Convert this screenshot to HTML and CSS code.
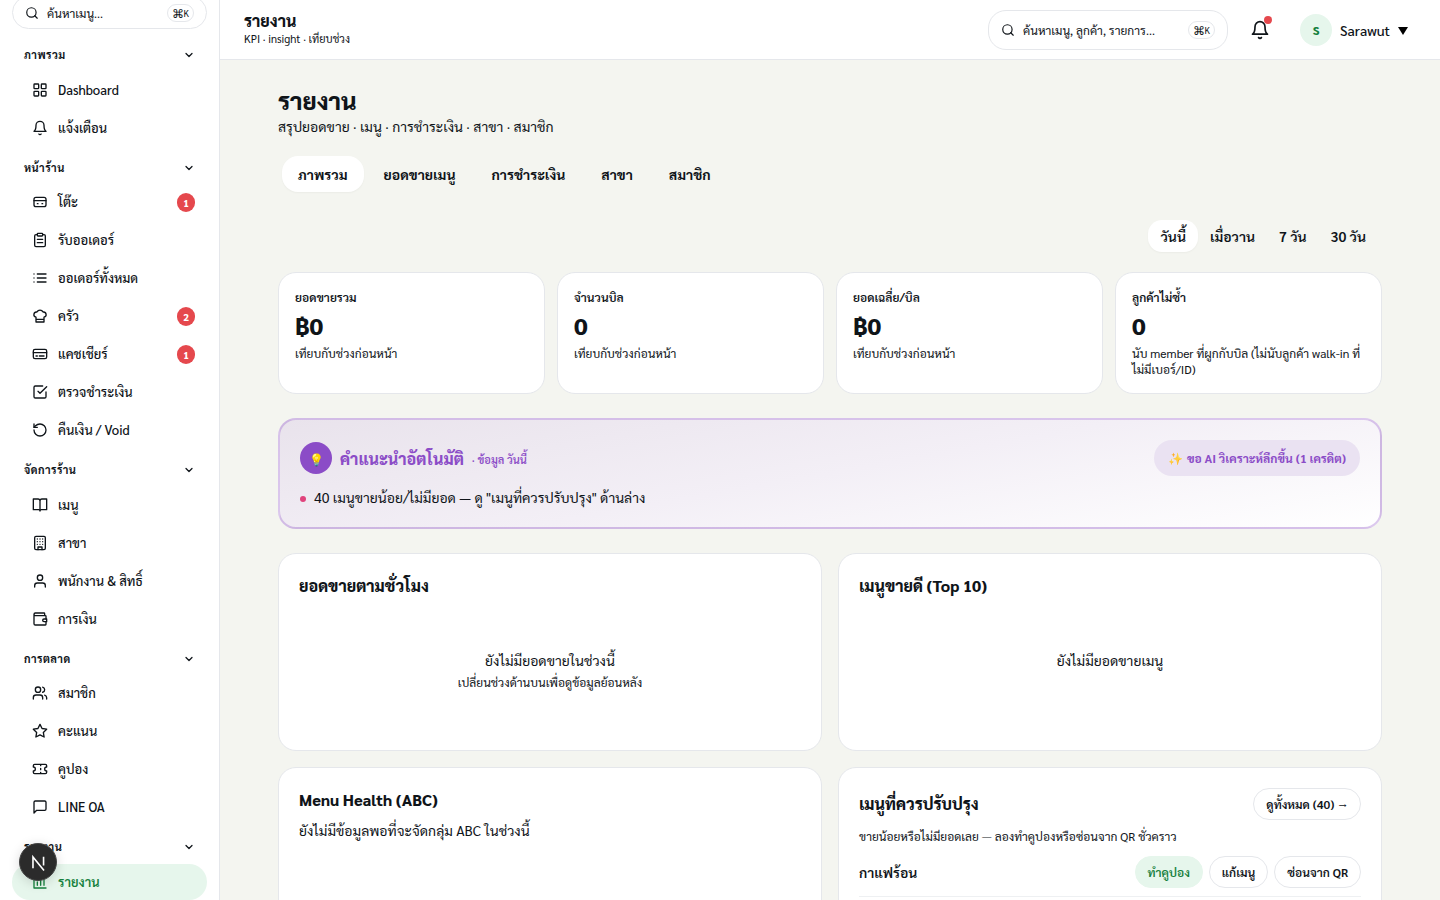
FILE: index.html
```html
<!DOCTYPE html>
<html lang="th">
<head>
    <meta charset="UTF-8">
    <meta name="viewport" content="width=device-width, initial-scale=1.0">
    <title>รายงาน</title>
    <link rel="stylesheet" href="styles.css">
</head>
<body>
    <div class="app">
        <aside class="sidebar">
            <div class="side-search">
                <svg class="icon icon-sm" viewBox="0 0 24 24"><circle cx="11" cy="11" r="8"/><path d="m21 21-4.3-4.3"/></svg>
                <span class="search-text">ค้นหาเมนู...</span>
                <kbd class="kbd">⌘<small>K</small></kbd>
            </div>

            <div class="nav-head"><span>ภาพรวม</span><svg class="icon chev" viewBox="0 0 24 24"><path d="m6 9 6 6 6-6"/></svg></div>
            <nav class="nav-list">
                <a class="nav-item"><svg class="icon" viewBox="0 0 24 24"><rect x="3" y="3" width="7" height="7" rx="1"/><rect x="14" y="3" width="7" height="7" rx="1"/><rect x="14" y="14" width="7" height="7" rx="1"/><rect x="3" y="14" width="7" height="7" rx="1"/></svg><span>Dashboard</span></a>
                <a class="nav-item"><svg class="icon" viewBox="0 0 24 24"><path d="M6 8a6 6 0 0 1 12 0c0 7 3 9 3 9H3s3-2 3-9"/><path d="M10.3 21a1.94 1.94 0 0 0 3.4 0"/></svg><span>แจ้งเตือน</span></a>
            </nav>

            <div class="nav-head"><span>หน้าร้าน</span><svg class="icon chev" viewBox="0 0 24 24"><path d="m6 9 6 6 6-6"/></svg></div>
            <nav class="nav-list">
                <a class="nav-item"><svg class="icon" viewBox="0 0 24 24"><rect x="3" y="5" width="18" height="14" rx="3"/><path d="M3 10h18M8 14.5h1M15 14.5h1"/></svg><span>โต๊ะ</span><b class="badge">1</b></a>
                <a class="nav-item"><svg class="icon" viewBox="0 0 24 24"><rect x="8" y="2" width="8" height="4" rx="1"/><path d="M16 4h2a2 2 0 0 1 2 2v14a2 2 0 0 1-2 2H6a2 2 0 0 1-2-2V6a2 2 0 0 1 2-2h2M8 11h8M8 16h8"/></svg><span>รับออเดอร์</span></a>
                <a class="nav-item"><svg class="icon" viewBox="0 0 24 24"><path d="M8 6h13M8 12h13M8 18h13M3 6h.01M3 12h.01M3 18h.01"/></svg><span>ออเดอร์ทั้งหมด</span></a>
                <a class="nav-item"><svg class="icon" viewBox="0 0 24 24"><path d="M6 13.87A4 4 0 0 1 7.41 6a5.11 5.11 0 0 1 9.18 0A4 4 0 0 1 18 13.87V21H6ZM6 17h12"/></svg><span>ครัว</span><b class="badge">2</b></a>
                <a class="nav-item"><svg class="icon" viewBox="0 0 24 24"><rect x="2" y="5" width="20" height="14" rx="2.5"/><path d="M2 10h20M6 15h2M11 15h7"/></svg><span>แคชเชียร์</span><b class="badge">1</b></a>
                <a class="nav-item"><svg class="icon" viewBox="0 0 24 24"><path d="m9 11 3 3L22 4"/><path d="M21 12v7a2 2 0 0 1-2 2H5a2 2 0 0 1-2-2V5a2 2 0 0 1 2-2h11"/></svg><span>ตรวจชำระเงิน</span></a>
                <a class="nav-item"><svg class="icon" viewBox="0 0 24 24"><path d="M3 12a9 9 0 1 0 9-9 9.75 9.75 0 0 0-6.74 2.74L3 8"/><path d="M3 3v5h5"/></svg><span>คืนเงิน / Void</span></a>
            </nav>

            <div class="nav-head"><span>จัดการร้าน</span><svg class="icon chev" viewBox="0 0 24 24"><path d="m6 9 6 6 6-6"/></svg></div>
            <nav class="nav-list">
                <a class="nav-item"><svg class="icon" viewBox="0 0 24 24"><path d="M2 3h7a3 3 0 0 1 3 3v15a2 2 0 0 0-2-2H2zM22 3h-7a3 3 0 0 0-3 3v15a2 2 0 0 1 2-2h8z"/></svg><span>เมนู</span></a>
                <a class="nav-item"><svg class="icon" viewBox="0 0 24 24"><rect x="4" y="2" width="16" height="20" rx="2"/><path d="M9 22v-4h6v4M8 6h.01M12 6h.01M16 6h.01M8 10h.01M12 10h.01M16 10h.01M8 14h.01M12 14h.01M16 14h.01"/></svg><span>สาขา</span></a>
                <a class="nav-item"><svg class="icon" viewBox="0 0 24 24"><circle cx="12" cy="7" r="4"/><path d="M20 21v-2a4 4 0 0 0-4-4H8a4 4 0 0 0-4 4v2"/></svg><span>พนักงาน &amp; สิทธิ์</span></a>
                <a class="nav-item"><svg class="icon" viewBox="0 0 24 24"><path d="M19 7V4a1 1 0 0 0-1-1H5a2 2 0 0 0 0 4h15a1 1 0 0 1 1 1v4M3 5v14a2 2 0 0 0 2 2h15a1 1 0 0 0 1-1v-4"/><path d="M22 12v4h-4a2 2 0 0 1 0-4Z"/></svg><span>การเงิน</span></a>
            </nav>

            <div class="nav-head"><span>การตลาด</span><svg class="icon chev" viewBox="0 0 24 24"><path d="m6 9 6 6 6-6"/></svg></div>
            <nav class="nav-list">
                <a class="nav-item"><svg class="icon" viewBox="0 0 24 24"><circle cx="9" cy="7" r="4"/><path d="M16 21v-2a4 4 0 0 0-4-4H6a4 4 0 0 0-4 4v2M22 21v-2a4 4 0 0 0-3-3.87M16 3.13a4 4 0 0 1 0 7.75"/></svg><span>สมาชิก</span></a>
                <a class="nav-item"><svg class="icon" viewBox="0 0 24 24"><path d="m12 2 3.09 6.26L22 9.27l-5 4.87 1.18 6.88L12 17.77l-6.18 3.25L7 14.14 2 9.27l6.91-1.01z"/></svg><span>คะแนน</span></a>
                <a class="nav-item"><svg class="icon" viewBox="0 0 24 24"><path d="M2 9a3 3 0 0 1 0 6v2a2 2 0 0 0 2 2h16a2 2 0 0 0 2-2v-2a3 3 0 0 1 0-6V7a2 2 0 0 0-2-2H4a2 2 0 0 0-2 2ZM13 5v2M13 17v2M13 11v2"/></svg><span>คูปอง</span></a>
                <a class="nav-item"><svg class="icon" viewBox="0 0 24 24"><path d="M21 15a2 2 0 0 1-2 2H7l-4 4V5a2 2 0 0 1 2-2h14a2 2 0 0 1 2 2z"/></svg><span>LINE OA</span></a>
            </nav>

            <div class="nav-head"><span>รายงาน</span><svg class="icon chev" viewBox="0 0 24 24"><path d="m6 9 6 6 6-6"/></svg></div>
            <nav class="nav-list">
                <a class="nav-item active"><svg class="icon" viewBox="0 0 24 24"><path d="M3 3v18h18M8 17v-5M13 17V7M18 17V9"/></svg><span>รายงาน</span></a>
            </nav>
        </aside>

        <div class="main">
            <header class="topbar">
                <div class="topbar-title">
                    <strong>รายงาน</strong>
                    <span>KPI · insight · เทียบช่วง</span>
                </div>
                <div class="top-search">
                    <svg class="icon icon-sm" viewBox="0 0 24 24"><circle cx="11" cy="11" r="8"/><path d="m21 21-4.3-4.3"/></svg>
                    <span class="search-text">ค้นหาเมนู, ลูกค้า, รายการ...</span>
                    <kbd class="kbd">⌘<small>K</small></kbd>
                </div>
                <div class="bell">
                    <svg class="icon" viewBox="0 0 24 24"><path d="M6 8a6 6 0 0 1 12 0c0 7 3 9 3 9H3s3-2 3-9"/><path d="M10.3 21a1.94 1.94 0 0 0 3.4 0"/></svg>
                    <i class="bell-dot"></i>
                </div>
                <div class="avatar">S</div>
                <span class="user-name">Sarawut</span>
                <svg class="caret" viewBox="0 0 10 8"><path d="M0 0h10L5 8z"/></svg>
            </header>

            <main class="content">
                <h1>รายงาน</h1>
                <p class="subtitle">สรุปยอดขาย · เมนู · การชำระเงิน · สาขา · สมาชิก</p>

                <div class="tabs">
                    <button class="tab active">ภาพรวม</button>
                    <button class="tab">ยอดขายเมนู</button>
                    <button class="tab">การชำระเงิน</button>
                    <button class="tab">สาขา</button>
                    <button class="tab">สมาชิก</button>
                </div>

                <div class="range">
                    <button class="range-btn active">วันนี้</button>
                    <button class="range-btn">เมื่อวาน</button>
                    <button class="range-btn">7 วัน</button>
                    <button class="range-btn">30 วัน</button>
                </div>

                <section class="kpis">
                    <div class="kpi">
                        <div class="kpi-label">ยอดขายรวม</div>
                        <div class="kpi-value">฿0</div>
                        <div class="kpi-hint">เทียบกับช่วงก่อนหน้า</div>
                    </div>
                    <div class="kpi">
                        <div class="kpi-label">จำนวนบิล</div>
                        <div class="kpi-value">0</div>
                        <div class="kpi-hint">เทียบกับช่วงก่อนหน้า</div>
                    </div>
                    <div class="kpi">
                        <div class="kpi-label">ยอดเฉลี่ย/บิล</div>
                        <div class="kpi-value">฿0</div>
                        <div class="kpi-hint">เทียบกับช่วงก่อนหน้า</div>
                    </div>
                    <div class="kpi">
                        <div class="kpi-label">ลูกค้าไม่ซ้ำ</div>
                        <div class="kpi-value">0</div>
                        <div class="kpi-hint">นับ member ที่ผูกกับบิล (ไม่นับลูกค้า walk-in ที่<br>ไม่มีเบอร์/ID)</div>
                    </div>
                </section>

                <section class="insight">
                    <div class="insight-head">
                        <span class="bulb">💡</span>
                        <h2>คำแนะนำอัตโนมัติ</h2>
                        <span class="insight-range">· ข้อมูล วันนี้</span>
                        <button class="ai-btn"><span class="spark">✨</span> <span>ขอ AI วิเคราะห์ลึกขึ้น (1 เครดิต)</span></button>
                    </div>
                    <div class="insight-row"><i class="dot"></i><span>40 เมนูขายน้อย/ไม่มียอด — ดู "เมนูที่ควรปรับปรุง" ด้านล่าง</span></div>
                </section>

                <section class="cards">
                    <div class="card">
                        <h3>ยอดขายตามชั่วโมง</h3>
                        <div class="empty">
                            <span>ยังไม่มียอดขายในช่วงนี้</span>
                            <small>เปลี่ยนช่วงด้านบนเพื่อดูข้อมูลย้อนหลัง</small>
                        </div>
                    </div>
                    <div class="card">
                        <h3>เมนูขายดี (Top 10)</h3>
                        <div class="empty"><span>ยังไม่มียอดขายเมนู</span></div>
                    </div>
                    <div class="card">
                        <h3>Menu Health (ABC)</h3>
                        <p class="card-text">ยังไม่มีข้อมูลพอที่จะจัดกลุ่ม ABC ในช่วงนี้</p>
                    </div>
                    <div class="card">
                        <div class="card-head">
                            <h3>เมนูที่ควรปรับปรุง</h3>
                            <button class="pill">ดูทั้งหมด (40) →</button>
                        </div>
                        <p class="card-hint">ขายน้อยหรือไม่มียอดเลย — ลองทำคูปองหรือซ่อนจาก QR ชั่วคราว</p>
                        <div class="menu-row">
                            <span class="menu-name">กาแฟร้อน</span>
                            <button class="pill green">ทำคูปอง</button>
                            <button class="pill">แก้เมนู</button>
                            <button class="pill">ซ่อนจาก QR</button>
                        </div>
                    </div>
                </section>
            </main>
        </div>
    </div>

    <div class="dev-badge">
        <svg viewBox="0 0 20 20"><path d="M5.2 15V5.2L14.8 17M14.4 5v7.5"/></svg>
    </div>
</body>
</html>
```
FILE: styles.css
```css
* {
    box-sizing: border-box;
}
body {
    margin: 0;
    height: 900px;
    overflow: hidden;
    font-family: "Sarabun", "Noto Sans Thai Looped", "Noto Sans Thai", "Noto Sans", sans-serif;
    font-size: 14px;
    color: #0f1419;
    background: #f4f5f0;
}
h1, h2, h3, p {
    margin: 0;
}
h1, h2, h3 {
    font-weight: 800;
}
button {
    font: inherit;
    color: inherit;
    border: none;
    background: none;
    padding: 0;
    white-space: nowrap;
}
.app {
    display: flex;
    height: 900px;
    overflow: hidden;
}
.icon {
    width: 16px;
    height: 16px;
    flex: none;
    fill: none;
    stroke: currentColor;
    stroke-width: 2;
    stroke-linecap: round;
    stroke-linejoin: round;
}
.icon-sm {
    width: 14px;
    height: 14px;
}

/* Sidebar */
.sidebar {
    width: 220px;
    flex: none;
    height: 900px;
    overflow: hidden;
    padding: 0 12px;
    background: #fff;
    border-right: 1px solid #e5e7eb;
}
.side-search, .top-search {
    display: flex;
    align-items: center;
    gap: 8px;
    background: #fff;
    border: 1px solid #e5e7eb;
    border-radius: 18px;
    white-space: nowrap;
}
.side-search {
    height: 33px;
    margin: -4px 0 12px;
    padding: 0 12px;
    font-size: 12px;
}
.search-text {
    flex: 1;
}
.kbd {
    display: flex;
    align-items: center;
    height: 18px;
    padding: 0 4px;
    border: 1px solid #e5e7eb;
    border-radius: 9px;
    font-family: inherit;
    font-size: 12px;
}
.kbd small {
    font-size: 9px;
}
.nav-head {
    display: flex;
    align-items: center;
    justify-content: space-between;
    height: 28.5px;
    padding: 0 12px;
    margin-bottom: 2px;
    font-size: 11px;
    font-weight: 700;
    letter-spacing: 0.44px;
}
.nav-head span, .nav-item span {
    margin-bottom: 0.6px;
}
.chev {
    width: 12px;
    height: 12px;
    stroke-width: 2.5;
}
.nav-list {
    display: flex;
    flex-direction: column;
    gap: 2px;
    margin-bottom: 8px;
}
.nav-item {
    display: flex;
    align-items: center;
    gap: 10px;
    height: 36px;
    padding: 0 12px 0 20px;
    border-radius: 18px;
    font-size: 13px;
    font-weight: 500;
    white-space: nowrap;
}
.nav-item.active {
    background: #e6f6ec;
    color: #15803d;
    font-weight: 600;
}
.badge {
    width: 18px;
    height: 19px;
    margin-left: auto;
    border-radius: 9px;
    background: #e5484d;
    color: #fff;
    font-size: 10px;
    font-weight: 800;
    line-height: 20px;
    text-align: center;
}

/* Top bar */
.main {
    flex: 1;
    min-width: 0;
}
.topbar {
    display: flex;
    align-items: center;
    height: 60px;
    padding: 0 32px 0 24px;
    background: #fff;
    border-bottom: 1px solid #e5e7eb;
}
.topbar-title {
    display: flex;
    flex-direction: column;
    margin: 0 auto 2px 0;
    font-size: 11px;
    line-height: 16px;
}
.topbar-title strong {
    font-size: 16px;
    font-weight: 800;
    line-height: 20px;
}
.top-search {
    width: 240px;
    height: 40px;
    padding: 0 12px;
    border-radius: 18px;
    font-size: 12px;
}
.bell {
    position: relative;
    display: flex;
    margin: 0 30px 0 22px;
}
.bell .icon {
    width: 20px;
    height: 20px;
}
.bell-dot {
    position: absolute;
    top: -4px;
    right: -2px;
    width: 8px;
    height: 8px;
    border-radius: 50%;
    background: #e5484d;
}
.avatar {
    width: 32px;
    height: 32px;
    border-radius: 50%;
    background: #e6f6ec;
    color: #15803d;
    font-size: 12px;
    font-weight: 800;
    line-height: 33px;
    text-align: center;
}
.user-name {
    width: 50px;
    margin: 0 8px;
    font-weight: 500;
}
.caret {
    width: 10px;
    height: 8px;
    margin-top: 2px;
}

/* Page */
.content {
    width: 1104px;
    margin: 0 auto;
    padding-top: 26px;
}
h1 {
    font-size: 24px;
    line-height: 28px;
}
.subtitle {
    margin-top: 1px;
    line-height: 22px;
}
.tabs {
    display: flex;
    gap: 4px;
    margin-top: 15px;
    padding: 4px;
}
.tab {
    height: 36px;
    padding: 0 16px;
    border-radius: 16px;
    font-weight: 700;
}
.tab.active, .range-btn.active {
    background: #fff;
    box-shadow: 0 1px 2px rgba(0,0,0,0.04);
}
.range {
    display: flex;
    justify-content: flex-end;
    margin-top: 20px;
    padding: 4px;
}
.range-btn {
    height: 32px;
    padding: 0 12px;
    border-radius: 14px;
    font-weight: 600;
}
.kpis {
    display: grid;
    grid-template-columns: repeat(4, 1fr);
    gap: 12px;
    margin-top: 16px;
}
.kpi, .card {
    background: #fff;
    border: 1px solid #e5e7eb;
    border-radius: 18px;
}
.kpi {
    height: 122px;
    padding: 15px 16px;
    white-space: nowrap;
}
.kpi-label {
    font-size: 12px;
    font-weight: 600;
    line-height: 18px;
}
.kpi-value {
    font-size: 24px;
    font-weight: 800;
    line-height: 28px;
    margin: 5px 0 6px;
}
.kpi-hint {
    font-size: 12px;
    line-height: 16px;
}

.insight {
    height: 111px;
    margin-top: 24px;
    padding: 20px;
    border: 2px solid rgba(139, 76, 199, 0.3);
    border-radius: 18px;
    background: linear-gradient(170deg, #e9e3ec 0%, #f3eff6 50%, #ffffff 100%);
}
.insight-head {
    display: flex;
    align-items: center;
    gap: 8px;
    height: 36px;
    color: #8b4cc7;
    white-space: nowrap;
}
.bulb {
    width: 32px;
    height: 32px;
    border-radius: 50%;
    background: #8b4cc7;
    font-size: 12px;
    line-height: 34px;
    text-align: center;
}
h2 {
    font-size: 16px;
}
.insight-range {
    margin-top: 3px;
    font-size: 11px;
    font-weight: 600;
}
.ai-btn {
    display: flex;
    align-items: center;
    gap: 4px;
    height: 36px;
    margin-left: auto;
    padding: 0 14px;
    border-radius: 18px;
    background: #eae2f2;
    font-size: 12px;
    font-weight: 700;
}
.spark {
    filter: hue-rotate(-12deg);
}
.insight-row {
    display: flex;
    align-items: center;
    gap: 8px;
    height: 24px;
    margin-top: 9px;
}
.dot {
    width: 6px;
    height: 6px;
    margin-top: 3px;
    border-radius: 50%;
    background: #e0437c;
}

.cards {
    display: grid;
    grid-template-columns: 1fr 1fr;
    gap: 16px;
    margin-top: 24px;
}
.card {
    min-height: 198px;
    padding: 20px;
    white-space: nowrap;
}
h3 {
    font-size: 16px;
    line-height: 24px;
}
.empty {
    display: flex;
    flex-direction: column;
    align-items: center;
    margin-top: 51px;
    line-height: 22px;
}
.empty small {
    font-size: 12px;
}
.card-text {
    margin-top: 7px;
    line-height: 22px;
}
.card-head, .menu-row {
    display: flex;
    align-items: center;
}
.card-head {
    justify-content: space-between;
    height: 32px;
}
.card-hint {
    margin-top: 6px;
    font-size: 12px;
    line-height: 20px;
}
.menu-row {
    gap: 6px;
    margin-top: 10px;
    padding-bottom: 8px;
    border-bottom: 1px solid #eef0f2;
}
.menu-name {
    margin-right: auto;
    font-weight: 600;
}
.pill {
    height: 32px;
    padding: 0 12px;
    border: 1px solid #e5e7eb;
    border-radius: 16px;
    font-size: 12px;
    font-weight: 600;
}
.pill.green {
    background: #e6f6ec;
    border-color: #e6f6ec;
    color: #15803d;
}

/* Floating dev tools button */
.dev-badge {
    position: fixed;
    left: 19px;
    bottom: 19px;
    width: 38px;
    height: 38px;
    display: flex;
    align-items: center;
    justify-content: center;
    border-radius: 50%;
    background: #2b2b2b;
    border: 1px solid #444;
    box-shadow: 0 2px 12px rgba(0,0,0,0.15);
}
.dev-badge svg {
    width: 23px;
    height: 23px;
    fill: none;
    stroke: #fff;
    stroke-width: 1.4;
}
```
